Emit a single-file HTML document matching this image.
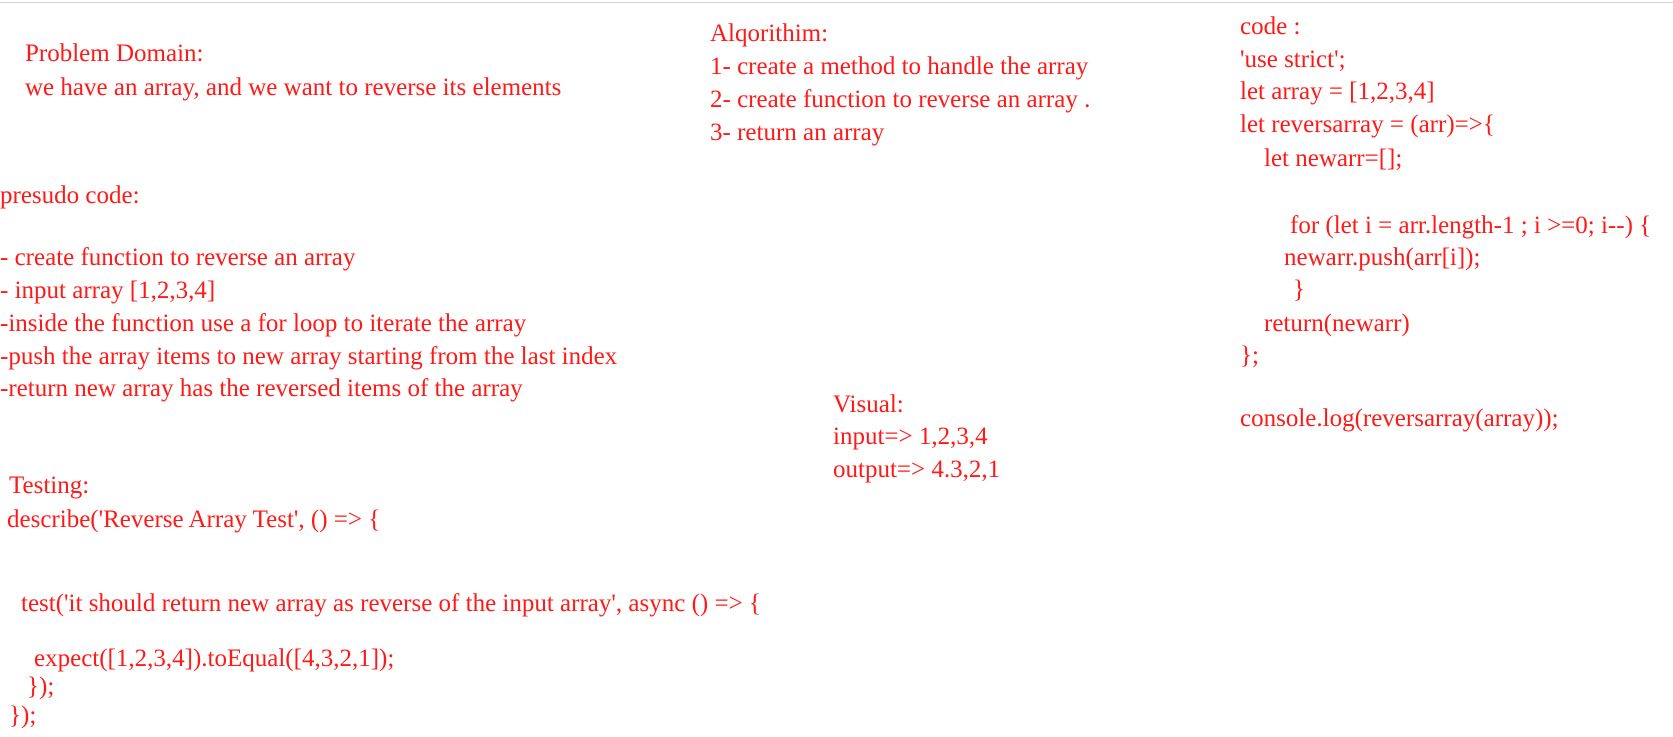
<!DOCTYPE html>
<html><head><meta charset="utf-8"><style>
html,body{margin:0;padding:0;background:#fff;width:1673px;height:737px;overflow:hidden;position:relative}
.top{position:absolute;left:0;top:2px;width:1673px;height:1px;background:#d4d4d4}
.l{position:absolute;white-space:pre;font-family:"Liberation Serif",serif;font-size:25px;line-height:34px;color:#ff1a1a}
</style></head><body>
<div class="top"></div>
<div class="l" style="left:25px;top:37px">Problem Domain:</div>
<div class="l" style="left:25px;top:71px">we have an array, and we want to reverse its elements</div>
<div class="l" style="left:0;top:179px">presudo code:</div>
<div class="l" style="left:0;top:241px">- create function to reverse an array</div>
<div class="l" style="left:0;top:274px">- input array [1,2,3,4]</div>
<div class="l" style="left:0;top:307px">-inside the function use a for loop to iterate the array</div>
<div class="l" style="left:0;top:340px">-push the array items to new array starting from the last index</div>
<div class="l" style="left:0;top:372px">-return new array has the reversed items of the array</div>
<div class="l" style="left:9px;top:469px">Testing:</div>
<div class="l" style="left:7px;top:503px">describe('Reverse Array Test', () =&gt; {</div>
<div class="l" style="left:21px;top:587px">test('it should return new array as reverse of the input array', async () =&gt; {</div>
<div class="l" style="left:34px;top:642px">expect([1,2,3,4]).toEqual([4,3,2,1]);</div>
<div class="l" style="left:27px;top:670px">});</div>
<div class="l" style="left:9px;top:699px">});</div>
<div class="l" style="left:710px;top:17px">Alqorithim:</div>
<div class="l" style="left:710px;top:50px">1- create a method to handle the array</div>
<div class="l" style="left:710px;top:83px">2- create function to reverse an array .</div>
<div class="l" style="left:710px;top:116px">3- return an array</div>
<div class="l" style="left:833px;top:388px">Visual:</div>
<div class="l" style="left:833px;top:420px">input=&gt; 1,2,3,4</div>
<div class="l" style="left:833px;top:453px">output=&gt; 4.3,2,1</div>
<div class="l" style="left:1240px;top:10px">code :</div>
<div class="l" style="left:1240px;top:43px">'use strict';</div>
<div class="l" style="left:1240px;top:75px">let array = [1,2,3,4]</div>
<div class="l" style="left:1240px;top:108px">let reversarray = (arr)=&gt;{</div>
<div class="l" style="left:1264px;top:142px">let newarr=[];</div>
<div class="l" style="left:1290px;top:209px">for (let i = arr.length-1 ; i &gt;=0; i--) {</div>
<div class="l" style="left:1284px;top:241px">newarr.push(arr[i]);</div>
<div class="l" style="left:1293px;top:273px">}</div>
<div class="l" style="left:1264px;top:307px">return(newarr)</div>
<div class="l" style="left:1240px;top:339px">};</div>
<div class="l" style="left:1240px;top:402px">console.log(reversarray(array));</div>
</body></html>
